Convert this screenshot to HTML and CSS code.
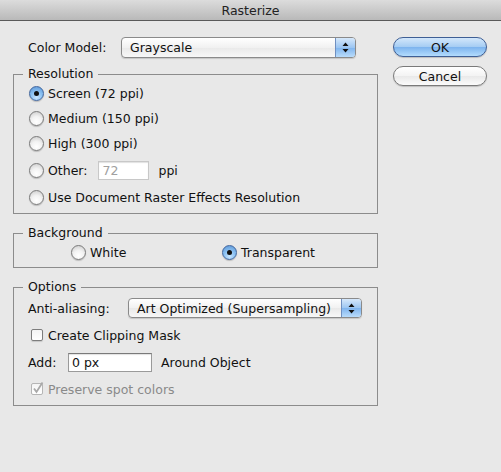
FILE: index.html
```html
<!DOCTYPE html>
<html lang="en">
<head>
    <meta charset="UTF-8">
    <meta name="viewport" content="width=device-width, initial-scale=1.0">
    <title>Rasterize</title>
    <link rel="stylesheet" href="styles.css">
</head>
<body>
    <div class="titlebar">Rasterize</div>
    <div class="dialog">
        <div class="main">
            <div class="field-row top-row">
                <label class="field-label">Color Model:</label>
                <div class="select model-select">
                    <span class="select-text">Grayscale</span>
                    <span class="select-arrows">
                        <svg width="7" height="11" viewBox="0 0 7 11"><path d="M3.5 0.5 L6.5 4 L0.5 4 Z M0.5 7 L6.5 7 L3.5 10.5 Z" fill="#111"/></svg>
                    </span>
                </div>
            </div>

            <fieldset class="group resolution">
                <legend>Resolution</legend>
                <div class="option"><span class="radio checked"></span>Screen (72 ppi)</div>
                <div class="option"><span class="radio"></span>Medium (150 ppi)</div>
                <div class="option"><span class="radio"></span>High (300 ppi)</div>
                <div class="option other-row">
                    <span class="radio"></span>Other:
                    <input class="text-input other-input" type="text" value="72" disabled>
                    <span class="unit">ppi</span>
                </div>
                <div class="option"><span class="radio"></span>Use Document Raster Effects Resolution</div>
            </fieldset>

            <fieldset class="group background">
                <legend>Background</legend>
                <div class="bg-row">
                    <div class="option white-opt"><span class="radio"></span>White</div>
                    <div class="option"><span class="radio checked"></span>Transparent</div>
                </div>
            </fieldset>

            <fieldset class="group options">
                <legend>Options</legend>
                <div class="field-row aa-row">
                    <label class="field-label aa-label">Anti-aliasing:</label>
                    <div class="select aa-select">
                        <span class="select-text">Art Optimized (Supersampling)</span>
                        <span class="select-arrows">
                            <svg width="7" height="11" viewBox="0 0 7 11"><path d="M3.5 0.5 L6.5 4 L0.5 4 Z M0.5 7 L6.5 7 L3.5 10.5 Z" fill="#111"/></svg>
                        </span>
                    </div>
                </div>
                <div class="option check-row"><span class="checkbox"></span>Create Clipping Mask</div>
                <div class="field-row add-row">
                    <label class="field-label add-label">Add:</label>
                    <input class="text-input add-input" type="text" value="0 px">
                    <span class="unit">Around Object</span>
                </div>
                <div class="option check-row disabled">
                    <span class="checkbox checked">
                        <svg width="14" height="14" viewBox="0 0 14 14"><path d="M3 7.5 L5.5 11 L11.5 1.5" fill="none" stroke="#a8a8a8" stroke-width="1.8"/></svg>
                    </span>Preserve spot colors
                </div>
            </fieldset>
        </div>

        <div class="buttons">
            <button class="btn btn-default">OK</button>
            <button class="btn">Cancel</button>
        </div>
    </div>
</body>
</html>
```

FILE: styles.css
```css
body {
    margin: 0;
    background-color: #e8e8e8;
    font-family: "DejaVu Sans", sans-serif;
    font-size: 12.5px;
    color: #111;
    width: 501px;
    height: 472px;
    overflow: hidden;
}
.titlebar {
    height: 20px;
    line-height: 21px;
    text-align: center;
    font-size: 12.5px;
    color: #222;
    background: linear-gradient(#dcdcdc, #b9b9b9);
    border-bottom: 1px solid #5a5a5a;
}
.dialog {
    display: flex;
    padding: 16px 0 0 13px;
}
.main {
    width: 365px;
}
.field-row {
    display: flex;
    align-items: center;
}
.top-row {
    height: 20px;
    padding-left: 15px;
}
.field-label {
    width: 93px;
}
.select {
    display: flex;
    align-items: stretch;
    box-sizing: border-box;
    border: 1px solid #8a8a8a;
    border-radius: 4px;
    background: linear-gradient(#ffffff, #f1f1f1 50%, #e9e9e9 51%, #f7f7f7);
    box-shadow: 0 1px 1px rgba(0, 0, 0, 0.15);
    overflow: hidden;
}
.model-select {
    width: 235px;
    height: 21px;
}
.select-text {
    flex: 1;
    padding-left: 8px;
    line-height: 19px;
}
.select-arrows {
    width: 19px;
    display: flex;
    align-items: center;
    justify-content: center;
    border-left: 1px solid #6f8fc0;
    background: linear-gradient(#d6e8fb, #9cc6f2 50%, #7fb4ee 51%, #b9dcfb);
}
.group {
    margin: 9px 0 0;
    padding: 0 9px 5px;
    border: 1px solid #8c8c8c;
    min-width: 0;
}
.group legend {
    padding: 0 5px;
    line-height: 16px;
}
.option {
    display: flex;
    align-items: center;
    height: 22px;
    margin-bottom: 3px;
    padding-left: 6px;
}
.option:last-child {
    margin-bottom: 0;
}
.other-row {
    height: 26px;
}
.radio {
    width: 13px;
    height: 13px;
    margin-right: 4px;
    border: 1px solid #7a7a7a;
    border-radius: 50%;
    background: radial-gradient(circle at 50% 75%, #ffffff, #f2f2f2 45%, #cfcfcf 90%);
    box-shadow: 0 1px 1px rgba(0, 0, 0, 0.2);
    flex-shrink: 0;
    position: relative;
}
.radio.checked {
    border-color: #41669e;
    background: radial-gradient(circle at 50% 80%, #c9e6ff, #8cc2f3 45%, #5d97d6 95%);
}
.radio.checked::after {
    content: "";
    position: absolute;
    left: 4px;
    top: 4px;
    width: 5px;
    height: 5px;
    border-radius: 50%;
    background: #111;
}
.text-input {
    box-sizing: border-box;
    height: 19px;
    border: 1px solid #9a9a9a;
    border-top-color: #7a7a7a;
    box-shadow: inset 0 1px 1px rgba(0, 0, 0, 0.12);
    background: #fff;
    font-family: "DejaVu Sans", sans-serif;
    font-size: 12.5px;
    padding: 0 3px;
    color: #111;
}
.other-input {
    width: 51px;
    margin-left: 11px;
    border-color: #c8c8c8;
    color: #a0a0a0;
    background: #fff;
    -webkit-text-fill-color: #a0a0a0;
}
.unit {
    margin-left: 9px;
}
.background {
    margin-top: 11px;
    padding-bottom: 1px;
}
.bg-row {
    display: flex;
    padding-left: 42px;
}
.white-opt {
    width: 145px;
}
.options {
    margin-top: 11px;
    padding-bottom: 2px;
}
.aa-row {
    height: 26px;
    padding-left: 5px;
}
.aa-label {
    width: 100px;
}
.aa-select {
    width: 234px;
    height: 20px;
}
.check-row {
    height: 28px;
    margin: 0;
    padding-left: 8px;
}
.checkbox {
    box-sizing: border-box;
    width: 12px;
    height: 12px;
    margin-right: 5px;
    border: 1px solid #7d7d7d;
    border-radius: 2px;
    background: linear-gradient(#f4f4f4, #ffffff);
    box-shadow: 0 1px 1px rgba(0, 0, 0, 0.15);
    position: relative;
    flex-shrink: 0;
}
.checkbox.checked {
    border-color: #b5b5b5;
    box-shadow: none;
}
.checkbox svg {
    position: absolute;
    left: -1px;
    top: -3px;
}
.disabled {
    color: #8a8a8a;
}
.add-row {
    height: 26px;
    padding-left: 5px;
}
.add-label {
    width: 40px;
}
.add-input {
    width: 84px;
}
.buttons {
    display: flex;
    flex-direction: column;
    gap: 9px;
    margin-left: 15px;
}
.btn {
    width: 94px;
    height: 20px;
    padding: 0;
    border: 1px solid #7a7a7a;
    border-radius: 10px;
    background: linear-gradient(#ffffff, #f3f3f3 50%, #e9e9e9 51%, #fbfbfb);
    box-shadow: 0 1px 1px rgba(0, 0, 0, 0.18);
    font-family: "DejaVu Sans", sans-serif;
    font-size: 12.5px;
    color: #111;
}
.btn-default {
    border-color: #3f5f95;
    background: linear-gradient(#d3e7fb, #a4ccf3 50%, #7cb3ee 51%, #b3dcfd);
}
```
